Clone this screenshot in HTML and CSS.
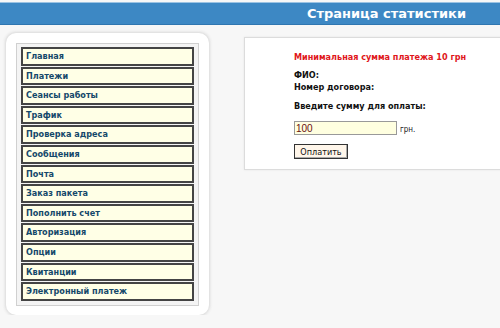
FILE: index.html
```html
<!DOCTYPE html>
<html lang="ru">
  <head>
    <meta charset="UTF-8" />
    <title>Страница статистики</title>
    <link rel="stylesheet" href="styles.css">
  </head>
  <body>
    <div class="header">Страница статистики</div>
    <div class="main">
      <div class="side">
        <ul class="menu">
          <li>Главная</li>
          <li>Платежи</li>
          <li>Сеансы работы</li>
          <li>Трафик</li>
          <li>Проверка адреса</li>
          <li>Сообщения</li>
          <li>Почта</li>
          <li>Заказ пакета</li>
          <li>Пополнить счет</li>
          <li>Авторизация</li>
          <li>Опции</li>
          <li>Квитанции</li>
          <li>Электронный платеж</li>
        </ul>
      </div>
      <div class="content">
        <p class="warn">Минимальная сумма платежа 10 грн</p>
        <p class="info">ФИО:<br />Номер договора:</p>
        <p class="info">Введите сумму для оплаты:</p>
        <div class="pay">
          <input class="sum" type="text" value="100" />
          <span>грн.</span>
        </div>
        <button class="btn">Оплатить</button>
      </div>
    </div>
  </body>
</html>
```

FILE: styles.css
```css
body {
  margin: 0;
  background-color: #f7f7f7;
  font-family: "DejaVu Sans", Verdana, sans-serif;
  overflow: hidden;
}

.header {
  margin-top: 2px;
  height: 21px;
  line-height: 21px;
  background-color: #3d88c4;
  border-top: 1px solid #9cc3e3;
  border-bottom: 1px solid #2f76b0;
  color: #fff;
  font-weight: bold;
  font-size: 13px;
  text-align: right;
  padding-right: 34px;
}

.main {
  display: flex;
  align-items: flex-start;
  gap: 35px;
  padding: 8px 0 0 6px;
}

.side {
  width: 183px;
  padding: 10px 10px 9px 10px;
  background: #fff;
  border-radius: 10px;
  box-shadow: 0 0 3px 1px #d8d8d8;
}

.menu {
  list-style: none;
  margin: 0;
  padding: 3px 4px 4px 4px;
  border: 1px solid #d0d0d0;
  background: #f4f4f4;
}

.menu li {
  height: 14.6px;
  line-height: 14.6px;
  margin-bottom: 1px;
  padding-left: 3px;
  background: #ffffe6;
  border: 2px solid #444;
  color: #14486a;
  font-family: "DejaVu Sans Condensed", "Liberation Sans Narrow", sans-serif;
  font-weight: bold;
  font-size: 9px;
}

.menu li:last-child {
  margin-bottom: 0;
}

.content {
  flex: 1;
  margin-top: 4px;
  margin-right: -20px;
  height: 118px;
  padding: 13px 0 0 49px;
  background: #fff;
  border: 1px solid #dcdcdc;
  box-shadow: 0 0 2px #e6e6e6;
  font-family: "DejaVu Sans Condensed", "Liberation Sans Narrow", sans-serif;
  font-size: 9px;
}

.content p {
  margin: 0 0 7px 0;
  font-weight: bold;
  color: #111;
  line-height: 12px;
}

.content .warn {
  color: #e0161a;
  margin-bottom: 6px;
}

.pay {
  display: flex;
  align-items: center;
  gap: 3px;
  margin-top: 9px;
}

.sum {
  width: 99px;
  height: 12px;
  padding: 0 1px;
  font-family: "Liberation Sans", Arial, sans-serif;
  font-size: 10px;
  color: #6a1010;
  background: #ffffe0;
  border: 1px solid #999;
}

.pay span {
  font-size: 8px;
  color: #222;
  padding-top: 3px;
}

.btn {
  margin-top: 9px;
  width: 54px;
  height: 15px;
  padding: 0;
  font-family: "DejaVu Sans Condensed", "Liberation Sans Narrow", sans-serif;
  font-size: 9px;
  color: #111;
  background: #fff6ea;
  border: 1px solid #333;
  box-shadow: inset -1px -1px 0 #aaa;
}
```
